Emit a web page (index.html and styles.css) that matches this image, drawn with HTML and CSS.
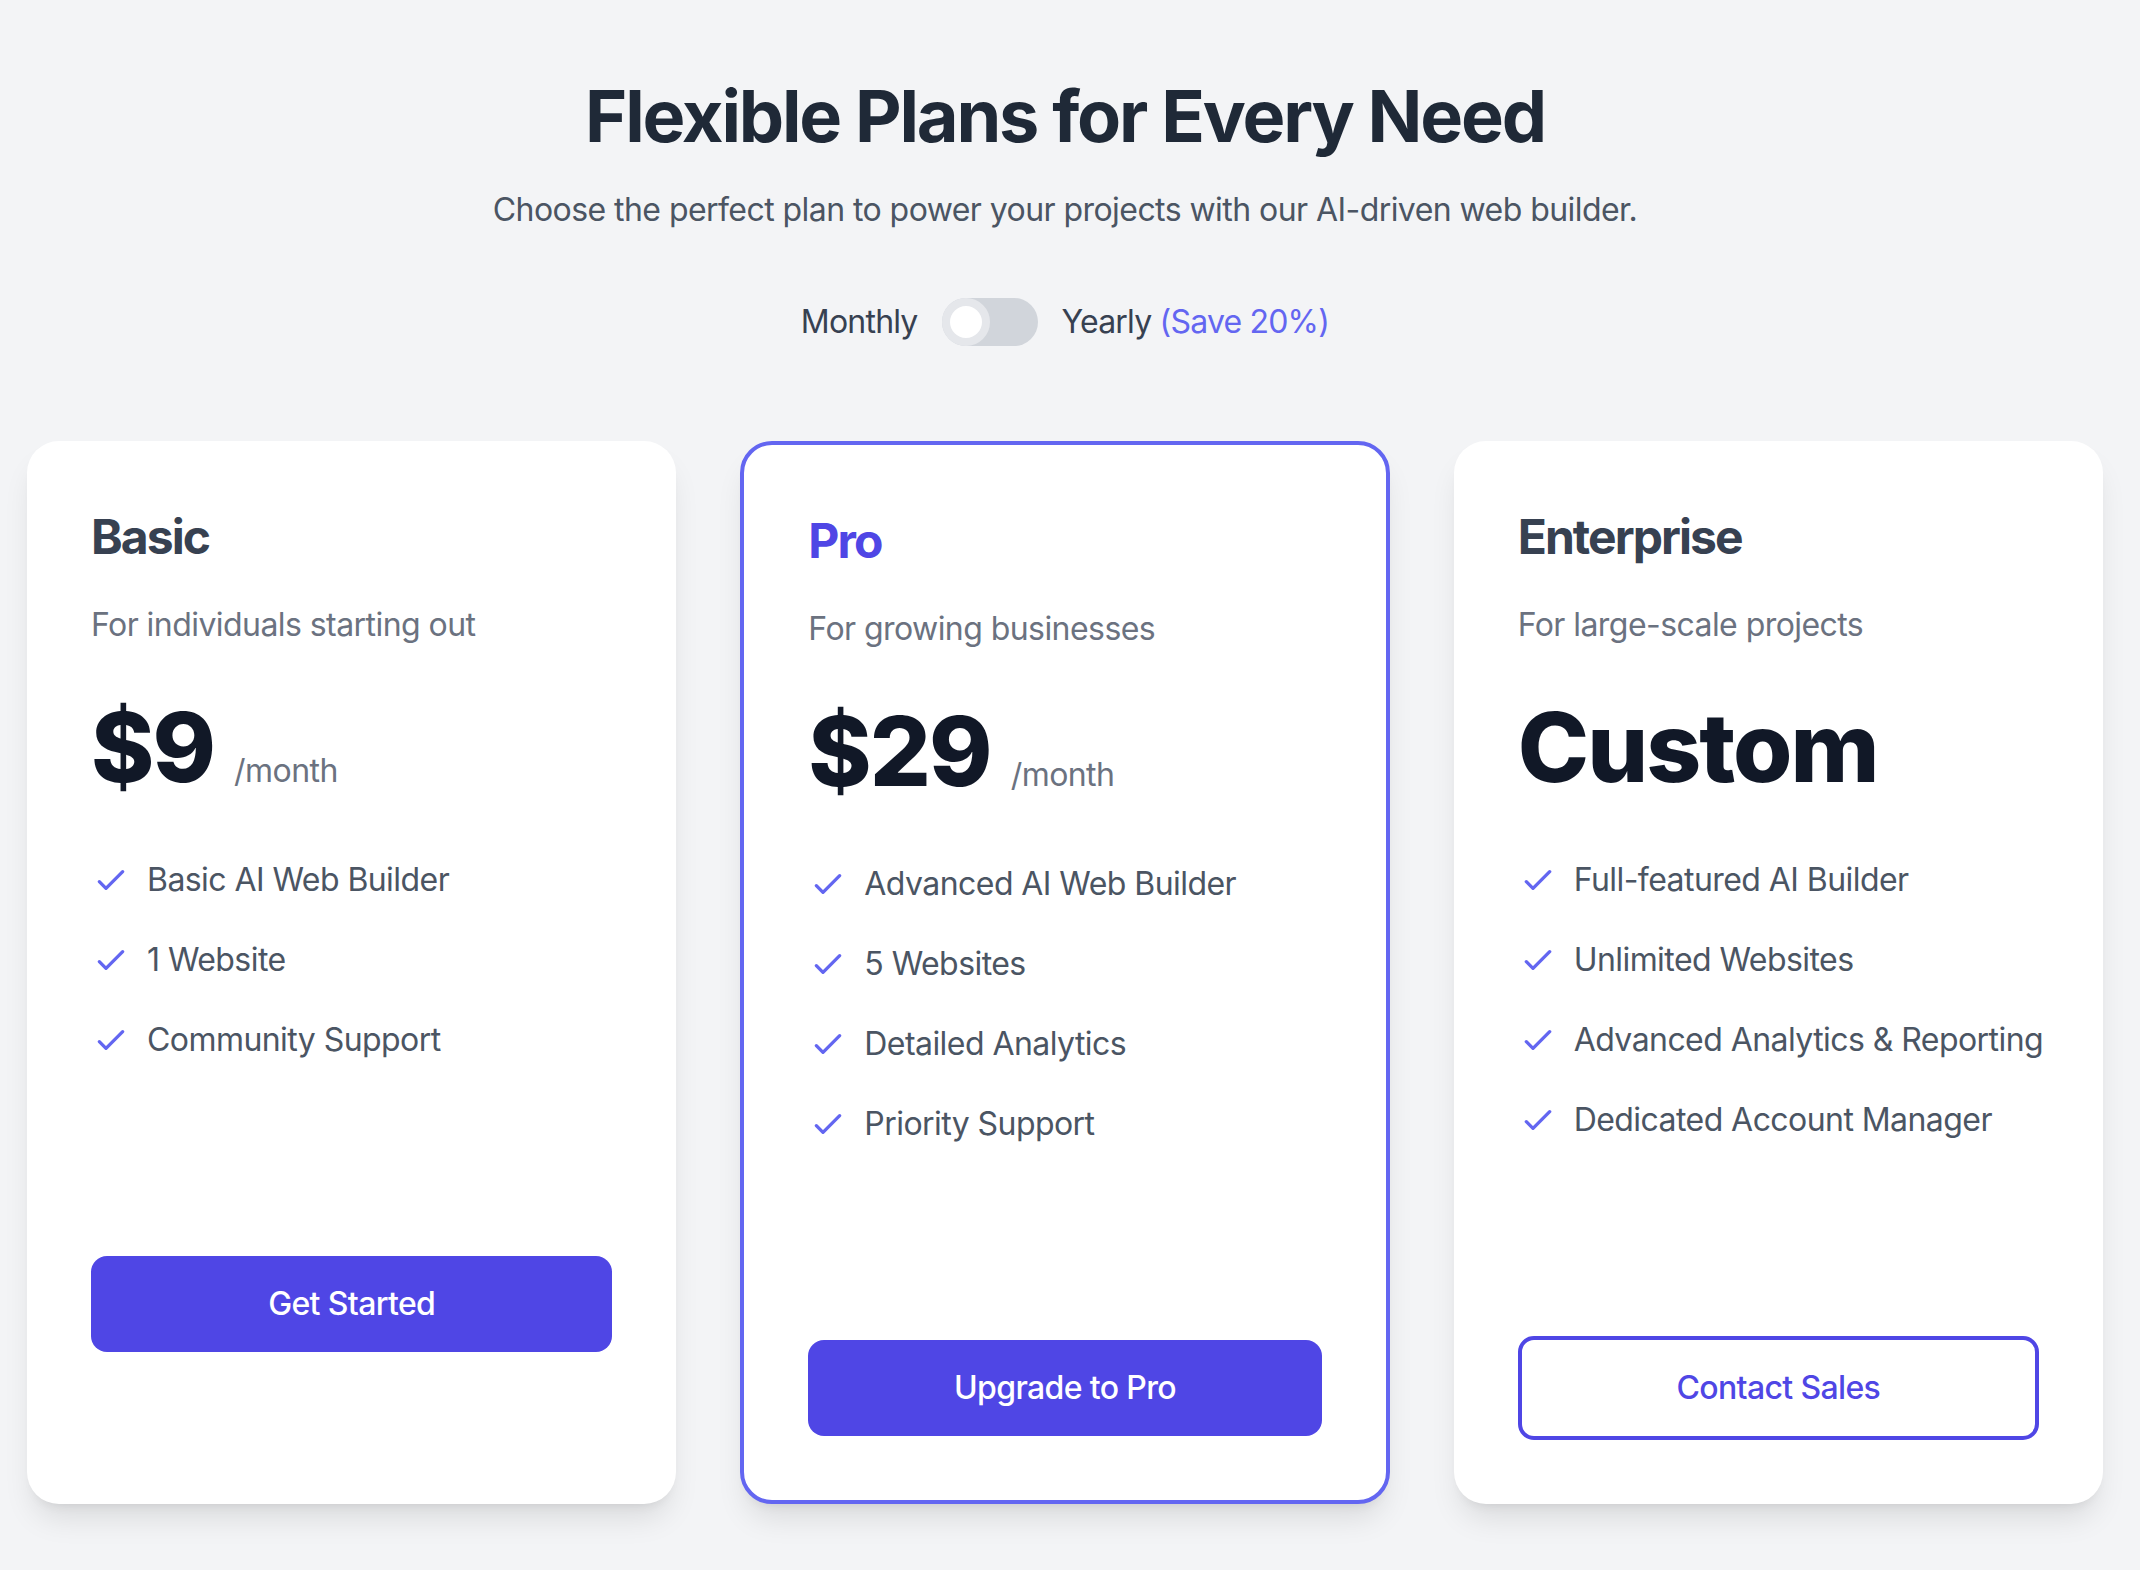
FILE: index.html
```html
<!DOCTYPE html>
<html lang="en">
<head>
  <meta charset="UTF-8" />
  <meta name="viewport" content="width=device-width, initial-scale=1.0" />
  <title>Pricing Plans</title>
  <link rel="stylesheet" href="styles.css">
</head>
<body>
  <div class="page">
    <div class="header">
      <h1>Flexible Plans for Every Need</h1>
      <p class="lead">Choose the perfect plan to power your projects with our AI-driven web builder.</p>
    </div>

    <div class="billing">
      <span>Monthly</span>
      <label class="switch">
        <input type="checkbox" id="billingToggle" />
        <span class="knob"></span>
      </label>
      <span>Yearly <span class="save">(Save 20%)</span></span>
    </div>

    <div class="plans">
      <div class="plan">
        <h2>Basic</h2>
        <p class="plan-desc">For individuals starting out</p>
        <div class="price"><span class="amount">$9</span><span class="period">/month</span></div>
        <ul class="features">
          <li><svg viewBox="0 0 24 24"><path d="M5 13l4 4L19 7"/></svg>Basic AI Web Builder</li>
          <li><svg viewBox="0 0 24 24"><path d="M5 13l4 4L19 7"/></svg>1 Website</li>
          <li><svg viewBox="0 0 24 24"><path d="M5 13l4 4L19 7"/></svg>Community Support</li>
        </ul>
        <button class="btn">Get Started</button>
      </div>

      <div class="plan featured">
        <h2>Pro</h2>
        <p class="plan-desc">For growing businesses</p>
        <div class="price"><span class="amount">$29</span><span class="period">/month</span></div>
        <ul class="features">
          <li><svg viewBox="0 0 24 24"><path d="M5 13l4 4L19 7"/></svg>Advanced AI Web Builder</li>
          <li><svg viewBox="0 0 24 24"><path d="M5 13l4 4L19 7"/></svg>5 Websites</li>
          <li><svg viewBox="0 0 24 24"><path d="M5 13l4 4L19 7"/></svg>Detailed Analytics</li>
          <li><svg viewBox="0 0 24 24"><path d="M5 13l4 4L19 7"/></svg>Priority Support</li>
        </ul>
        <button class="btn">Upgrade to Pro</button>
      </div>

      <div class="plan">
        <h2>Enterprise</h2>
        <p class="plan-desc">For large-scale projects</p>
        <div class="price"><span class="amount">Custom</span></div>
        <ul class="features">
          <li><svg viewBox="0 0 24 24"><path d="M5 13l4 4L19 7"/></svg>Full-featured AI Builder</li>
          <li><svg viewBox="0 0 24 24"><path d="M5 13l4 4L19 7"/></svg>Unlimited Websites</li>
          <li><svg viewBox="0 0 24 24"><path d="M5 13l4 4L19 7"/></svg>Advanced Analytics &amp; Reporting</li>
          <li><svg viewBox="0 0 24 24"><path d="M5 13l4 4L19 7"/></svg>Dedicated Account Manager</li>
        </ul>
        <button class="btn btn-outline">Contact Sales</button>
      </div>
    </div>
  </div>
</body>
</html>
```

FILE: styles.css
```css
body {
  margin: 0;
  background: #f3f4f6;
  font-family: Inter, "Noto Sans", sans-serif;
  letter-spacing: -0.035em;
  color: #1f2937;
}
.page {
  padding: 76px 37px 64px 27px;
}
.header {
  text-align: center;
}
h1 {
  margin: 0 0 30px;
  font-size: 72px;
  line-height: 80px;
  font-weight: 700;
  letter-spacing: -0.03em;
  color: #1f2937;
}
.lead {
  margin: 0;
  font-size: 32px;
  line-height: 48px;
  color: #4b5563;
}
.billing {
  display: flex;
  justify-content: center;
  align-items: center;
  gap: 24px;
  margin: 64px 0 95px;
  font-size: 32px;
  line-height: 48px;
  letter-spacing: -0.025em;
  color: #374151;
}
.save {
  color: #6366f1;
}
.switch {
  position: relative;
  display: block;
  width: 96px;
  height: 48px;
  border-radius: 24px;
  background: #d1d5db;
  cursor: pointer;
}
.switch input {
  display: none;
}
.knob {
  position: absolute;
  top: 0;
  left: 0;
  width: 32px;
  height: 32px;
  border: 8px solid #e5e7eb;
  border-radius: 50%;
  background: #fff;
}
.plans {
  display: grid;
  grid-template-columns: repeat(3, minmax(0, 1fr));
  gap: 64px;
}
.plan {
  background: #fff;
  border-radius: 32px;
  padding: 64px;
  box-shadow: 0 20px 30px -6px rgba(0,0,0,0.1), 0 8px 12px -8px rgba(0,0,0,0.1);
}
.plan.featured {
  border: 4px solid #6366f1;
}
.plan h2 {
  margin: 0 0 32px;
  font-size: 48px;
  line-height: 64px;
  font-weight: 700;
  letter-spacing: -0.04em;
  color: #374151;
}
.plan.featured h2 {
  color: #4f46e5;
}
.plan-desc {
  margin: 0 0 50px;
  font-size: 32px;
  line-height: 48px;
  color: #6b7280;
}
.price {
  display: flex;
  align-items: baseline;
  margin-bottom: 61px;
}
.amount {
  font-size: 96px;
  line-height: 96px;
  font-weight: 800;
  letter-spacing: -0.02em;
  color: #111827;
}
.period {
  margin-left: 20px;
  font-size: 32px;
  color: #6b7280;
}
.features {
  list-style: none;
  margin: 0 0 192px;
  padding: 0;
  display: flex;
  flex-direction: column;
  gap: 32px;
}
.features li {
  display: flex;
  align-items: center;
  white-space: nowrap;
  font-size: 32px;
  line-height: 48px;
  color: #4b5563;
}
.features svg {
  flex-shrink: 0;
  width: 40px;
  height: 40px;
  margin-right: 16px;
  fill: none;
  stroke: #6366f1;
  stroke-width: 2;
  stroke-linecap: round;
  stroke-linejoin: round;
}
.btn {
  display: block;
  width: 100%;
  padding: 24px 0;
  border: none;
  border-radius: 16px;
  background: #4f46e5;
  color: #fff;
  font-family: inherit;
  font-size: 32px;
  line-height: 48px;
  font-weight: 500;
  letter-spacing: -0.02em;
  cursor: pointer;
}
.btn-outline {
  background: #fff;
  color: #4f46e5;
  border: 4px solid #4f46e5;
}
```
